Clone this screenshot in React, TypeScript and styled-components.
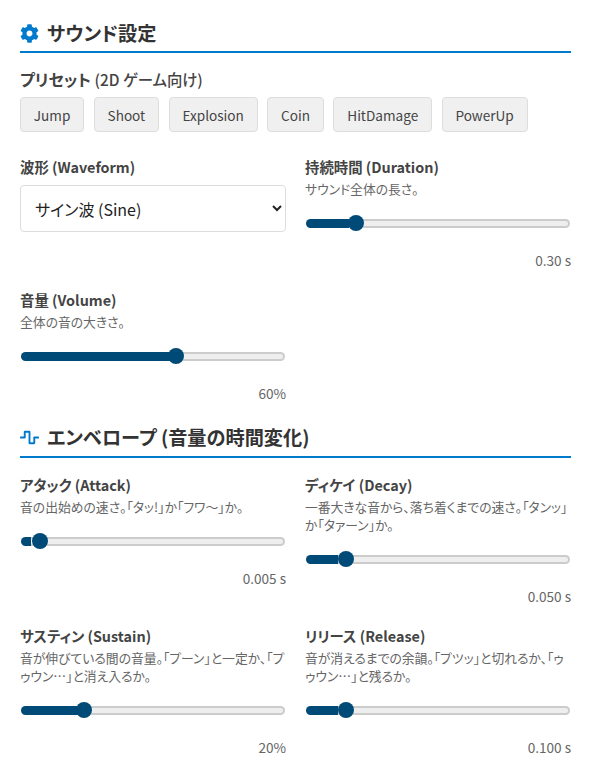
import React from 'react';
import styled, { createGlobalStyle } from 'styled-components';
import { FaCog, FaWaveSquare } from 'react-icons/fa';

const GlobalStyle = createGlobalStyle`
  html, body {
    margin: 0;
    padding: 0;
    background: #fff;
    font-family: 'Noto Sans CJK JP', 'Noto Sans', sans-serif;
    font-feature-settings: 'palt';
    color: #333;
  }
`;

const presets = ['Jump', 'Shoot', 'Explosion', 'Coin', 'HitDamage', 'PowerUp'];

function Control({ label, desc, value, text }) {
  return (
    <Group>
      <Label>{label}</Label>
      <Desc>{desc}</Desc>
      <Slider
        type="range"
        min={0}
        max={100}
        step="any"
        defaultValue={value}
        style={{ '--pct': `${value}%` } as React.CSSProperties}
      />
      <Value>{text}</Value>
    </Group>
  );
}

export default function App() {
  return (
    <Page>
      <GlobalStyle />
      <SectionTitle>
        <FaCog />
        サウンド設定
      </SectionTitle>
      <PresetLabel>
        プリセット <small>(2D ゲーム向け)</small>
      </PresetLabel>
      <PresetRow>
        {presets.map((p) => (
          <PresetButton key={p}>{p}</PresetButton>
        ))}
      </PresetRow>
      <Grid>
        <Group>
          <Label>波形 (Waveform)</Label>
          <Select defaultValue="sine">
            <option value="sine">サイン波 (Sine)</option>
            <option value="square">矩形波 (Square)</option>
          </Select>
        </Group>
        <Control label="持続時間 (Duration)" desc="サウンド全体の長さ。" value={16.2} text="0.30 s" />
        <Control label="音量 (Volume)" desc="全体の音の大きさ。" value={59.6} text="60%" />
      </Grid>
      <SectionTitle $second>
        <FaWaveSquare />
        エンベロープ (音量の時間変化)
      </SectionTitle>
      <Grid>
        <Control label="アタック (Attack)" desc="音の出始めの速さ。「タッ!」か「フワ〜」か。" value={3.8} text="0.005 s" />
        <Control label="ディケイ (Decay)" desc="一番大きな音から、落ち着くまでの速さ。「タンッ」か「タァーン」か。" value={12.2} text="0.050 s" />
        <Control label="サスティン (Sustain)" desc="音が伸びている間の音量。「プーン」と一定か、「プゥウン…」と消え入るか。" value={21.6} text="20%" />
        <Control label="リリース (Release)" desc="音が消えるまでの余韻。「プツッ」と切れるか、「ゥゥウン…」と残るか。" value={12.2} text="0.100 s" />
      </Grid>
    </Page>
  );
}

const Page = styled.div`
  width: 551px;
  margin-left: 20px;
  padding-top: 20px;
  box-sizing: border-box;
`;

const SectionTitle = styled.h2<{ $second?: boolean }>`
  display: flex;
  align-items: center;
  gap: 8px;
  margin: ${(p) => (p.$second ? '21px' : '0')} 0 16px;
  padding-bottom: ${(p) => (p.$second ? '6px' : '5px')};
  border-bottom: 2px solid #007acc;
  font-size: 19.2px;
  line-height: 26px;
  font-weight: 700;
  color: #333;

  svg {
    width: 19px;
    height: 19px;
    color: #007acc;
  }
`;

const PresetLabel = styled.div`
  font-size: 16px;
  line-height: 20px;
  font-weight: 700;
  color: #444;
  margin-bottom: 8px;

  small {
    font-size: 15.4px;
    font-weight: 500;
  }
`;

const PresetRow = styled.div`
  display: flex;
  gap: 9.6px;
  margin-bottom: 24px;
`;

const PresetButton = styled.button`
  height: 35px;
  padding: 0 12.8px;
  font-family: inherit;
  font-feature-settings: inherit;
  font-size: 13.6px;
  color: #444;
  background: #f0f0f0;
  border: 1px solid #ddd;
  border-radius: 4px;
`;

const Grid = styled.div`
  display: grid;
  grid-template-columns: 1fr 1fr;
  column-gap: 19px;
  row-gap: 19px;
  align-items: start;
`;

const Group = styled.div`
  display: flex;
  flex-direction: column;
  min-width: 0;
`;

const Label = styled.label`
  font-size: 14.4px;
  line-height: 22px;
  font-weight: 700;
  color: #444;
  margin-bottom: 2px;
`;

const Desc = styled.p`
  margin: 0 0 15px;
  font-size: 12.8px;
  line-height: 18px;
  color: #666;
`;

const Select = styled.select`
  width: 100%;
  height: 47px;
  margin-top: 5px;
  padding: 0 10px;
  font-family: inherit;
  font-feature-settings: inherit;
  font-size: 16px;
  color: #222;
  background: #fff;
  border: 1px solid #ddd;
  border-radius: 4px;
`;

const Slider = styled.input`
  -webkit-appearance: none;
  appearance: none;
  display: block;
  width: calc(100% - 2px);
  height: 20px;
  margin: 0 1px;
  background: transparent;

  &::-webkit-slider-runnable-track {
    height: 9px;
    border-radius: 5px;
    border: 2px solid transparent;
    box-sizing: border-box;
    background:
      linear-gradient(to right, #004a77 var(--pct), transparent var(--pct)) border-box,
      linear-gradient(#eee, #eee) padding-box,
      linear-gradient(#ccc, #ccc) border-box;
  }

  &::-webkit-slider-thumb {
    -webkit-appearance: none;
    width: 16px;
    height: 16px;
    margin-top: -5.5px;
    border-radius: 50%;
    background: #004a77;
  }
`;

const Value = styled.div`
  margin-top: 17px;
  text-align: right;
  font-size: 13.6px;
  line-height: 20px;
  color: #666;
`;
